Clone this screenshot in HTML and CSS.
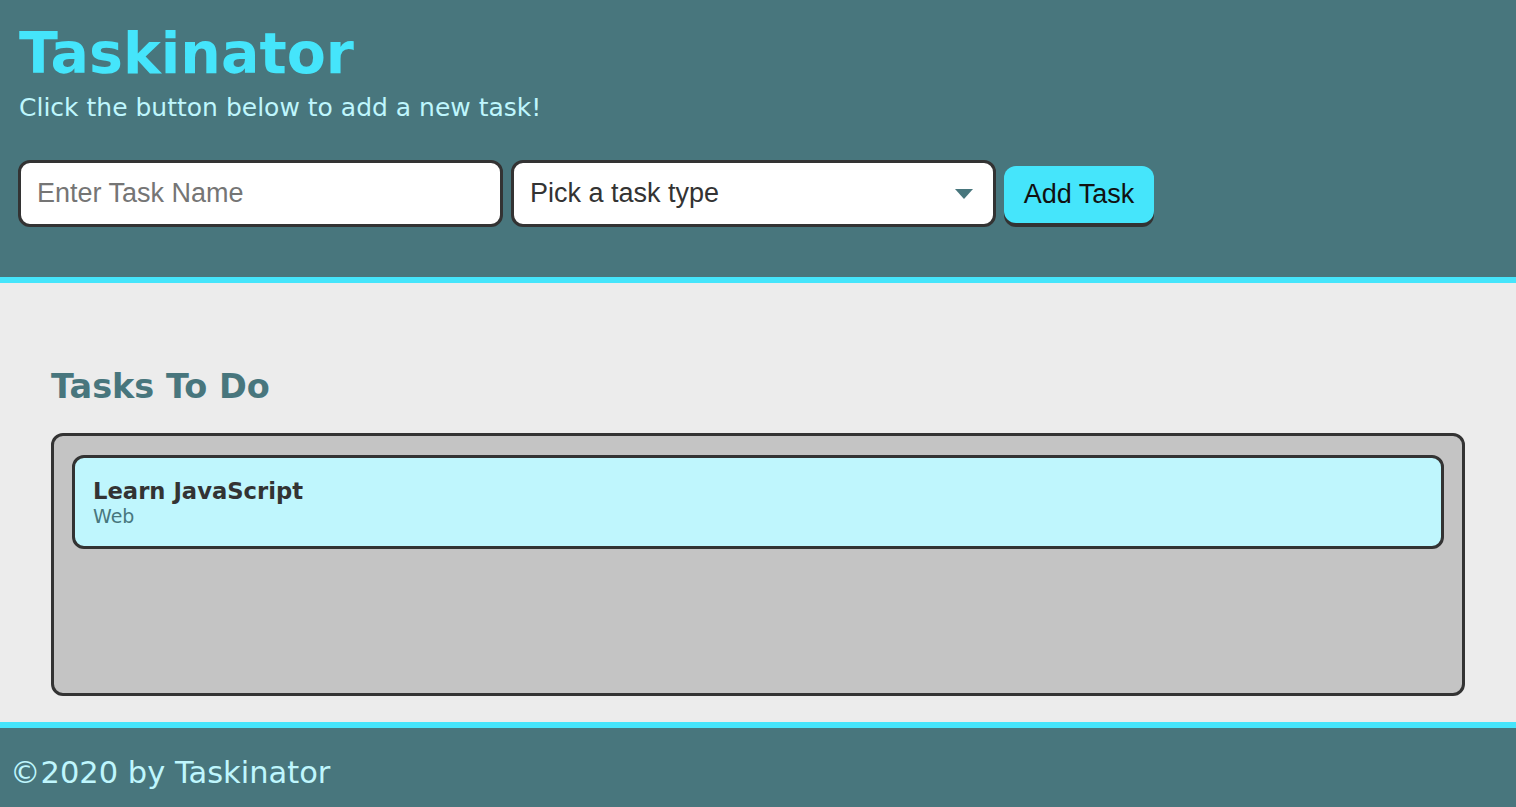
FILE: index.html
```html
<!DOCTYPE html>
<html lang="en">
<head>
<meta charset="UTF-8">
<title>Taskinator</title>
<link rel="stylesheet" href="styles.css">
</head>
<body>
<header class="header">
  <h1 class="page-title">Taskinator</h1>
  <p class="subtitle">Click the button below to add a new task!</p>
  <form class="task-form">
    <input class="field" type="text" placeholder="Enter Task Name">
    <div class="select-field">
      <span class="select-text">Pick a task type</span>
      <svg class="select-arrow" width="18" height="10" viewBox="0 0 18 10"><path d="M0 0 H18 L9 10 Z" fill="#48767d"/></svg>
    </div>
    <button class="btn" type="button">Add Task</button>
  </form>
</header>
<main class="main">
  <section class="task-list-wrapper">
    <h2 class="list-title">Tasks To Do</h2>
    <ul class="task-list">
      <li class="task-item">
        <h3 class="task-name">Learn JavaScript</h3>
        <span class="task-type">Web</span>
      </li>
    </ul>
  </section>
</main>
<footer class="footer">
  <p class="footer-text">©2020 by Taskinator</p>
</footer>
</body>
</html>
```

FILE: styles.css
```css
* { box-sizing: border-box; }
html, body { margin: 0; padding: 0; }
body {
  font-family: "DejaVu Sans", Verdana, sans-serif;
  background: #ececec;
  color: #333;
  width: 1516px;
  height: 807px;
  overflow: hidden;
  display: flex;
  flex-direction: column;
}
.header {
  background: #48767d;
  border-bottom: 6px solid #45e5fb;
  padding: 25px 18px 0 18px;
  height: 283px;
  flex: none;
}
.page-title {
  margin: 0;
  font-size: 57px;
  line-height: 1;
  font-weight: bold;
  color: #45e5fb;
  padding-left: 1px;
}
.subtitle {
  margin: 11px 0 0 1px;
  font-size: 25px;
  line-height: 1.2;
  color: #bff6fd;
}
.task-form {
  display: flex;
  align-items: flex-start;
  gap: 8px;
  margin-top: 37px;
}
.field, .select-field {
  width: 485px;
  height: 67px;
  border: 3px solid #333;
  border-radius: 12px;
  background: #fff;
  font-family: "Liberation Sans", Arial, sans-serif;
  font-size: 27px;
  padding: 0 16px;
  color: #333;
}
.field::placeholder { color: #757575; }
.select-field {
  display: flex;
  align-items: center;
  justify-content: space-between;
  padding-right: 20px;
}
.select-text { color: #333; }
.select-arrow { display: block; }
.btn {
  margin-top: 6px;
  height: 57px;
  padding: 0 18px;
  background: #45e5fb;
  border: none;
  border-radius: 12px;
  box-shadow: 0 4px 0 #333;
  font-family: "Liberation Sans", Arial, sans-serif;
  font-size: 27px;
  color: #111;
  width: 150px;
}
.main {
  flex: 1;
  padding: 84px 51px 0 51px;
}
.list-title {
  margin: 0;
  font-size: 33.5px;
  line-height: 1.2;
  color: #48767d;
  font-weight: bold;
}
.task-list {
  list-style: none;
  margin: 26px 0 0 0;
  padding: 19px 18px;
  height: 263px;
  background: #c4c4c4;
  border: 3px solid #333;
  border-radius: 12px;
}
.task-item {
  background: #bff6fd;
  border: 3px solid #333;
  border-radius: 12px;
  height: 94px;
  padding: 20px 18px;
}
.task-name {
  margin: 0;
  font-size: 22.7px;
  line-height: 1.2;
  color: #333;
  font-weight: bold;
}
.task-type {
  display: block;
  font-size: 19px;
  line-height: 1.2;
  color: #48767d;
}
.footer {
  background: #48767d;
  border-top: 6px solid #45e5fb;
  height: 85px;
  flex: none;
  padding: 27px 10px 0 10px;
}
.footer-text {
  margin: 0;
  font-size: 30.5px;
  line-height: 1.2;
  color: #bff6fd;
}
```
